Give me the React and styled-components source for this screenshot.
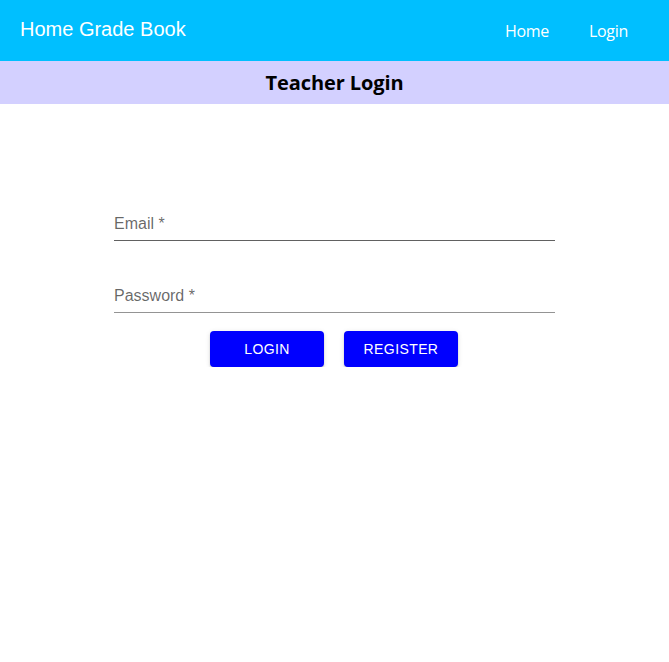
import React from "react";
import styled, { createGlobalStyle } from "styled-components";

const Global = createGlobalStyle`
  body { margin: 0; background: #fff; font-family: "Liberation Sans", Arial, sans-serif; }
`;

const Header = styled.header`
  height: 61px;
  background: #00bfff;
  display: flex;
  align-items: center;
  justify-content: space-between;
  padding: 0 41px 0 20px;
  color: #fff;
`;

const Brand = styled.div`
  font-size: 20px;
  margin-top: -2px;
`;

const Nav = styled.nav`
  display: flex;
  gap: 40px;
`;

const NavLink = styled.a`
  color: #fff;
  font-size: 16px;
  text-decoration: none;
  font-family: "Open Sans", "Liberation Sans", sans-serif;
  letter-spacing: -0.3px;
`;

const SubHeader = styled.div`
  height: 43px;
  background: #d3d0ff;
  display: flex;
  align-items: center;
  justify-content: center;
`;

const SubTitle = styled.h1`
  margin: 0;
  font-size: 20px;
  font-weight: 700;
  font-family: "Open Sans", "Noto Sans", sans-serif;
  color: #000;
  letter-spacing: -0.1px;
`;

const Form = styled.form`
  width: 441px;
  margin: 73px auto 0;
  display: flex;
  flex-direction: column;
`;

const Field = styled.label`
  display: flex;
  align-items: center;
  margin: 16px 0 8px;
  height: 48px;
  box-sizing: border-box;
  padding-top: 16px;
  border-bottom: 1px solid ${(p) => (p.$dark ? "#616161" : "#949494")};
`;

const Label = styled.span`
  font-size: 16px;
  color: rgba(0, 0, 0, 0.6);
  margin-top: -1px;
`;

const Buttons = styled.div`
  display: flex;
  justify-content: center;
  gap: 20px;
  margin-top: 10px;
  padding-right: 1px;
`;

const Button = styled.button`
  width: 114px;
  height: 36px;
  border: none;
  border-radius: 4px;
  background: #0000ff;
  color: #fff;
  font-family: "Liberation Sans", Arial, sans-serif;
  font-size: 14px;
  letter-spacing: 0.4px;
  text-transform: uppercase;
  box-shadow: 0 3px 1px -2px rgba(0,0,0,0.2), 0 2px 2px 0 rgba(0,0,0,0.14), 0 1px 5px 0 rgba(0,0,0,0.12);
  cursor: pointer;
`;

export default function App() {
  return (
    <>
      <Global />
      <Header>
        <Brand>Home Grade Book</Brand>
        <Nav>
          <NavLink href="#">Home</NavLink>
          <NavLink href="#">Login</NavLink>
        </Nav>
      </Header>
      <SubHeader>
        <SubTitle>Teacher Login</SubTitle>
      </SubHeader>
      <Form onSubmit={(e) => e.preventDefault()}>
        <Field $dark>
          <Label>Email *</Label>
        </Field>
        <Field>
          <Label>Password *</Label>
        </Field>
        <Buttons>
          <Button type="submit">Login</Button>
          <Button type="button">Register</Button>
        </Buttons>
      </Form>
    </>
  );
}
